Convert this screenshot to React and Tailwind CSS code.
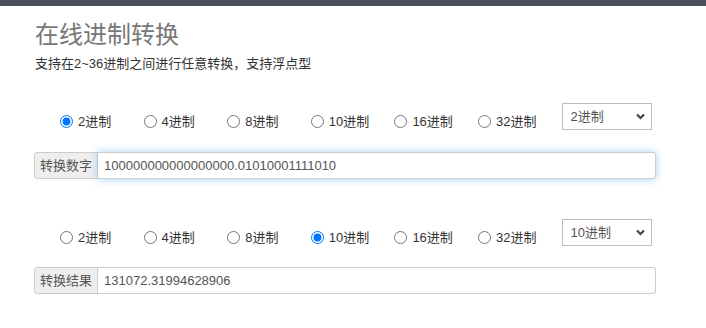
import React, { useState } from 'react';

const bases = [2, 4, 8, 10, 16, 32];
const font = { fontFamily: '"Liberation Sans", "Noto Sans CJK SC", sans-serif' };

const Chevron = () => (
    <svg width="9" height="7" viewBox="0 0 9 7" className="absolute right-[7px] top-[10px] pointer-events-none">
        <path d="M1 1.5 L4.5 5 L8 1.5" fill="none" stroke="#444" strokeWidth="2.2" />
    </svg>
);

const BaseRow = ({ name, value, onChange }) => (
    <div className="flex items-start pl-[60px] h-[27px]">
        {bases.map((b) => (
            <label key={b} className="flex items-center w-[83.6px] mt-[12px] h-[13px] text-[13px] text-[#333] cursor-pointer">
                <input
                    type="radio"
                    name={name}
                    checked={value === b}
                    onChange={() => onChange(b)}
                    className="m-0 w-[13px] h-[13px] mr-[5px] accent-[#0075ff]"
                />
                <span>{b}进制</span>
            </label>
        ))}
        <div className="relative">
            <select
                value={value}
                onChange={(e) => onChange(Number(e.target.value))}
                className="appearance-none w-[90px] h-[27px] border border-[#bdbdbd] bg-white pl-[8px] text-[13px] text-[#555] outline-none"
                style={font}
            >
                {Array.from({ length: 35 }, (_, i) => i + 2).map((n) => (
                    <option key={n} value={n}>{n}进制</option>
                ))}
            </select>
            <Chevron />
        </div>
    </div>
);

const InputGroup = ({ label, value, focused }) => (
    <div className="flex h-[27px] pl-[34px] pr-[50px]">
        <span className="flex items-center px-[5px] bg-[#eee] border border-[#ccc] rounded-l-[3px] text-[13px] text-[#555] whitespace-nowrap">
            {label}
        </span>
        <input
            readOnly
            value={value}
            className={`flex-1 min-w-0 border border-l-0 border-[#ccc] rounded-r-[3px] px-[6px] text-[13px] text-[#555] outline-none ${focused ? 'shadow-[0_0_8px_rgba(102,175,233,0.6)]' : ''}`}
            style={font}
        />
    </div>
);

export default function App() {
    const [from, setFrom] = useState(2);
    const [to, setTo] = useState(10);

    return (
        <div className="w-[706px] h-[328px] bg-white overflow-hidden" style={font}>
            <div className="h-[6px] bg-[#4a4f5a]" />
            <div className="pl-[35px] pt-[14px]">
                <h1 className="text-[24px] leading-[30px] text-[#777] font-normal">在线进制转换</h1>
                <p className="mt-[6px] text-[13px] leading-[16px] text-[#333]">支持在2~36进制之间进行任意转换，支持浮点型</p>
            </div>
            <div className="mt-[31px]">
                <BaseRow name="from" value={from} onChange={setFrom} />
            </div>
            <div className="mt-[22px]">
                <InputGroup label="转换数字" value="100000000000000000.01010001111010" focused />
            </div>
            <div className="mt-[40px]">
                <BaseRow name="to" value={to} onChange={setTo} />
            </div>
            <div className="mt-[21px]">
                <InputGroup label="转换结果" value="131072.31994628906" />
            </div>
        </div>
    );
}
